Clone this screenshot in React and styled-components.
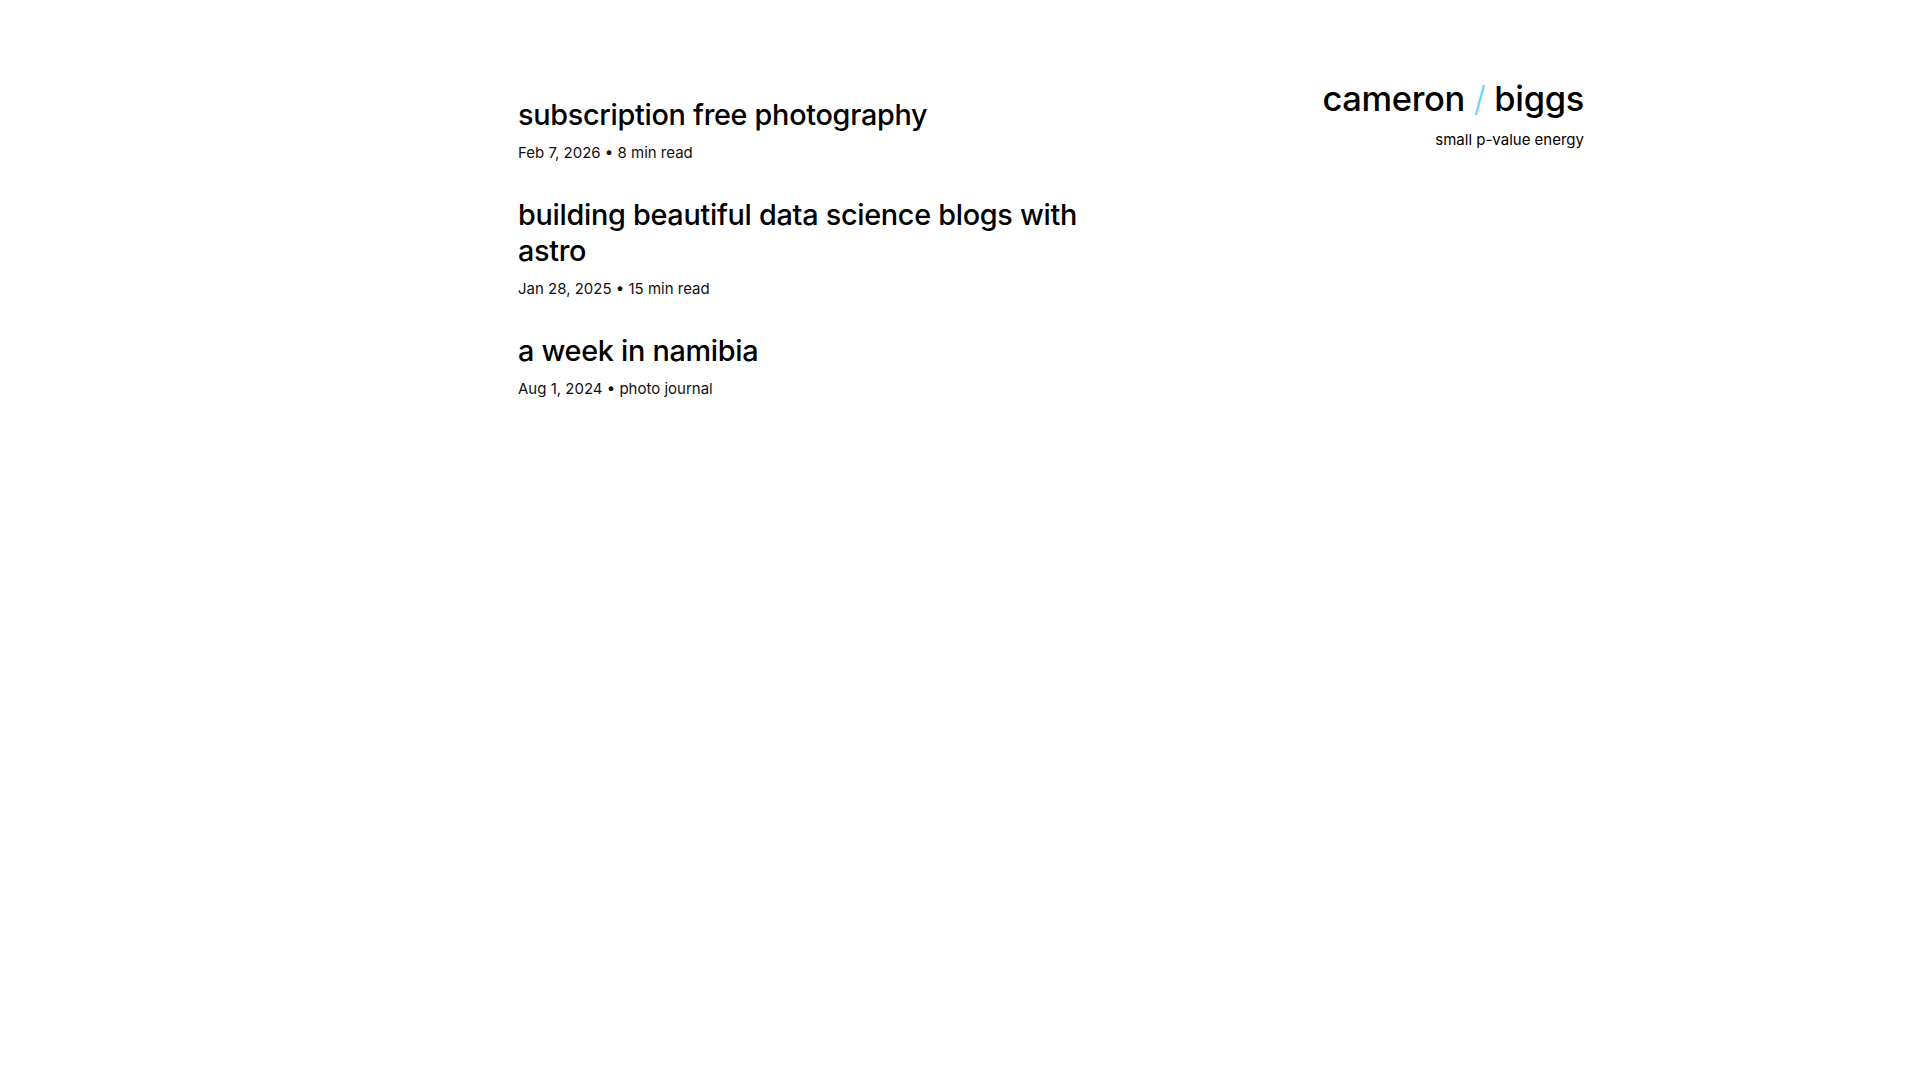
import styled, { createGlobalStyle } from "styled-components";

const GlobalStyle = createGlobalStyle`
  body {
    margin: 0;
    background: #ffffff;
    color: #000000;
    font-family: Inter, "Noto Sans", sans-serif;
  }
`;

const posts = [
  { title: "subscription free photography", date: "Feb 7, 2026", note: "8 min read" },
  { title: "building beautiful data science blogs with astro", date: "Jan 28, 2025", note: "15 min read" },
  { title: "a week in namibia", date: "Aug 1, 2024", note: "photo journal" },
];

const Page = styled.div`
  max-width: 1248px;
  margin: 0 auto;
  padding: 79px 0 0;
  display: grid;
  grid-template-columns: 182px 600px 1fr;
  align-items: start;
`;

const PostList = styled.main`
  grid-column: 2;
  display: flex;
  flex-direction: column;
  gap: 34px;
  padding-top: 18px;
`;

const Post = styled.article`
  display: flex;
  flex-direction: column;
  gap: 10px;
`;

const Title = styled.a`
  font-size: 28.8px;
  font-weight: 500;
  line-height: 36px;
  letter-spacing: -0.01em;
  color: #000;
  text-decoration: none;
  cursor: pointer;
`;

const Meta = styled.div`
  font-size: 15px;
  line-height: 20px;
  color: #111;
`;

const Brand = styled.header`
  grid-column: 3;
  display: flex;
  flex-direction: column;
  align-items: flex-end;
`;

const Name = styled.div`
  font-size: 34.5px;
  font-weight: 500;
  line-height: 40px;
  letter-spacing: -0.01em;
  white-space: pre;
`;

const Slash = styled.span`
  color: #6ccff6;
  font-weight: 300;
`;

const Tagline = styled.div`
  font-size: 15px;
  line-height: 20px;
  margin-top: 11px;
`;

export default function App() {
  return (
    <>
      <GlobalStyle />
      <Page>
        <PostList>
          {posts.map((p) => (
            <Post key={p.title}>
              <Title>{p.title}</Title>
              <Meta>
                {p.date} • {p.note}
              </Meta>
            </Post>
          ))}
        </PostList>
        <Brand>
          <Name>
            cameron <Slash>/</Slash> biggs
          </Name>
          <Tagline>small p-value energy</Tagline>
        </Brand>
      </Page>
    </>
  );
}
